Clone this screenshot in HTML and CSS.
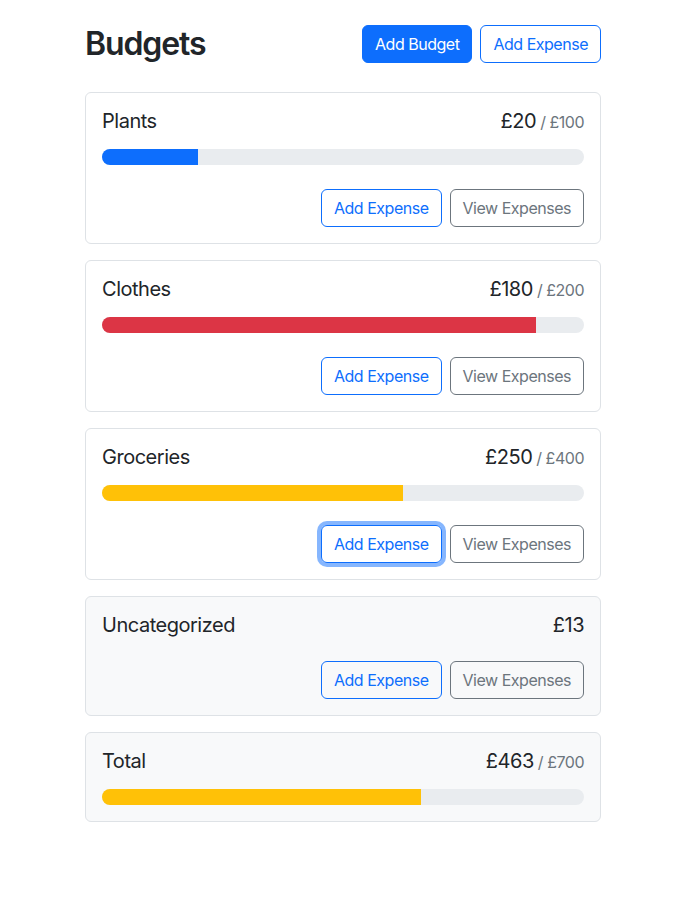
FILE: index.html
```html
<!DOCTYPE html>
<html lang="en">
<head>
<meta charset="utf-8">
<title>Budgets</title>
<link rel="stylesheet" href="styles.css">
</head>
<body>
<div class="container">
  <div class="header">
    <h1 class="title">Budgets</h1>
    <button class="btn btn-primary">Add Budget</button>
    <button class="btn btn-outline-primary">Add Expense</button>
  </div>
  <div class="grid">
    <div class="card">
      <div class="card-title">
        <div class="name">Plants</div>
        <div class="amount">£20<span class="max">/ £100</span></div>
      </div>
      <div class="progress"><div class="bar bar-primary" style="width:20%"></div></div>
      <div class="actions">
        <button class="btn btn-outline-primary">Add Expense</button>
        <button class="btn btn-outline-secondary">View Expenses</button>
      </div>
    </div>
    <div class="card">
      <div class="card-title">
        <div class="name">Clothes</div>
        <div class="amount">£180<span class="max">/ £200</span></div>
      </div>
      <div class="progress"><div class="bar bar-danger" style="width:90%"></div></div>
      <div class="actions">
        <button class="btn btn-outline-primary">Add Expense</button>
        <button class="btn btn-outline-secondary">View Expenses</button>
      </div>
    </div>
    <div class="card">
      <div class="card-title">
        <div class="name">Groceries</div>
        <div class="amount">£250<span class="max">/ £400</span></div>
      </div>
      <div class="progress"><div class="bar bar-warning" style="width:62.5%"></div></div>
      <div class="actions">
        <button class="btn btn-outline-primary focused">Add Expense</button>
        <button class="btn btn-outline-secondary">View Expenses</button>
      </div>
    </div>
    <div class="card card-light">
      <div class="card-title">
        <div class="name">Uncategorized</div>
        <div class="amount">£13</div>
      </div>
      <div class="actions">
        <button class="btn btn-outline-primary">Add Expense</button>
        <button class="btn btn-outline-secondary">View Expenses</button>
      </div>
    </div>
    <div class="card card-light">
      <div class="card-title">
        <div class="name">Total</div>
        <div class="amount">£463<span class="max">/ £700</span></div>
      </div>
      <div class="progress"><div class="bar bar-warning" style="width:66.14%"></div></div>
    </div>
  </div>
</div>
</body>
</html>
```
FILE: styles.css
```css
* { box-sizing: border-box; }
body {
  margin: 0;
  font-family: Inter, "Noto Sans", "Liberation Sans", sans-serif;
  font-size: 16px;
  line-height: 1.5;
  letter-spacing: -0.03em;
  color: #212529;
  background: #fff;
}
.container {
  width: 519px;
  padding-right: 3px;
  margin: 25px auto 24px;
}
.header {
  display: flex;
  align-items: center;
  gap: 8px;
  margin-bottom: 29px;
}
.title {
  margin: 0 auto 0 0;
  font-size: 32px;
  font-weight: 600;
  line-height: 38px;
  letter-spacing: -1.1px;
}
.btn {
  font-family: inherit;
  font-size: 16px;
  line-height: 24px;
  letter-spacing: -0.03em;
  padding: 6px 12px;
  border-radius: 6px;
  border: 1px solid transparent;
  background: transparent;
  cursor: pointer;
}
.btn-primary { background: #0d6efd; border-color: #0d6efd; color: #fff; }
.btn-outline-primary { border-color: #0d6efd; color: #0d6efd; }
.btn-outline-secondary { border-color: #6c757d; color: #6c757d; }
.focused { box-shadow: 0 0 0 4px rgba(13,110,253,.5); }
.grid {
  display: grid;
  grid-template-columns: 1fr;
  gap: 16px;
  align-items: start;
}
.card {
  border: 1px solid #dee2e6;
  border-radius: 6px;
  padding: 16px;
  background: #fff;
}
.card-light { background: #f8f9fa; }
.card-title {
  display: flex;
  justify-content: space-between;
  align-items: baseline;
  font-size: 20px;
  line-height: 24px;
  height: 24px;
  margin-bottom: 16px;
}
.amount { display: flex; align-items: baseline; }
.max {
  font-size: 16px;
  line-height: 1;
  color: #6c757d;
  margin-left: 4px;
}
.progress {
  height: 16px;
  background: #e9ecef;
  border-radius: 50rem;
  overflow: hidden;
  display: flex;
}
.bar { height: 100%; }
.bar-primary { background: #0d6efd; }
.bar-danger { background: #dc3545; }
.bar-warning { background: #ffc107; }
.actions {
  display: flex;
  justify-content: flex-end;
  gap: 8px;
  margin-top: 24px;
}
.card-title:has(+ .actions) { margin-bottom: 0; }
```
